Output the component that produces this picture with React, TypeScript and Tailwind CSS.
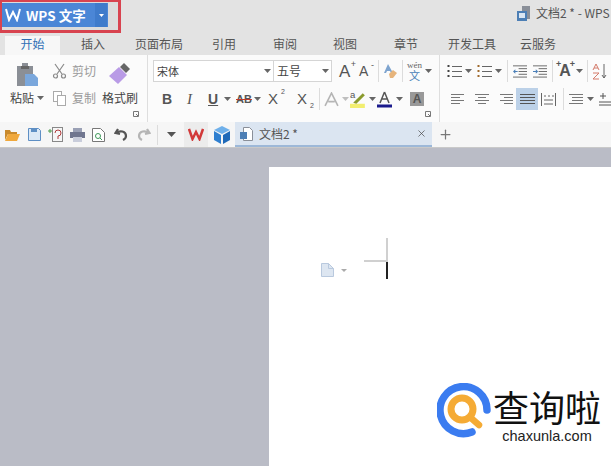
import React from 'react';
import { X, Plus } from 'lucide-react';

const cjk = "font-['Noto_Sans_CJK_SC','Liberation_Sans',sans-serif]";

const Caret = ({ className = '' }: { className?: string }) => (
  <svg width="7" height="4" viewBox="0 0 7 4" className={`shrink-0 ${className}`}>
    <path d="M0 0h7L3.5 4z" fill="#666" />
  </svg>
);

const Sep = ({ className = '' }: { className?: string }) => (
  <div className={`w-px h-[22px] bg-[#dcdcdc] shrink-0 ${className}`} />
);

const Lines = ({ rows, active }: { rows: [number, number][]; active?: boolean }) => (
  <svg width="15" height="13" viewBox="0 0 15 13">
    {rows.map(([x, w], i) => (
      <rect key={i} x={x} y={i * 3 + 1} width={w} height="1" fill={active ? '#555' : '#777'} />
    ))}
  </svg>
);

const ListIcon = ({ numbered }: { numbered?: boolean }) => (
  <svg width="15" height="15" viewBox="0 0 15 15">
    {[2, 7, 12].map(y => (
      <g key={y}>
        <rect x="0.5" y={y - 1} width="2" height="2" fill={numbered ? '#a06a2c' : '#444'} />
        <rect x="5" y={y} width="10" height="1" fill="#666" />
      </g>
    ))}
  </svg>
);

const IndentIcon = ({ right }: { right?: boolean }) => (
  <svg width="14" height="14" viewBox="0 0 15 14">
    {[1, 4, 7, 10, 13].map(y => (
      <rect key={y} x={y === 1 || y === 13 ? 0 : 6} y={y} width={y === 1 || y === 13 ? 15 : 9} height="1" fill="#666" />
    ))}
    <path d={right ? 'M0 7h3V5l2.500 2.500L3 10V8H0z' : 'M5 7H2.500V5L0 7.500 2.500 10V8H5z'} fill="#4a7fb8" />
  </svg>
);

function TitleBar() {
  return (
    <div className="h-9 bg-[#e3e3e3] flex items-start">
      <div className="w-[121px] h-[33px] border-[3px] border-t-[2px] border-l-[2px] border-[#d8434f] bg-[#dcdcdc] shrink-0 pt-px">
        <div className="w-[106px] h-[24px] bg-[#4b86d6] flex items-center text-white">
          <svg width="16" height="14" viewBox="0 0 16 14" className="ml-[3px] shrink-0">
            <path d="M1 1l3 11 4-8 4 8 3-11" fill="none" stroke="#fff" strokeWidth="2" />
          </svg>
          <span className={`ml-[5px] text-[13.5px] font-bold w-[68px] whitespace-nowrap ${cjk}`}>WPS 文字</span>
          <div className="ml-[1px] w-3 h-full bg-[#3f7bcb] flex items-center justify-center">
            <svg width="5" height="3" viewBox="0 0 5 3"><path d="M0 0h5L2.500 3z" fill="#fff" /></svg>
          </div>
        </div>
      </div>
      <svg width="15" height="16" viewBox="0 0 15 16" className="ml-[395px] mt-[6px] shrink-0">
        <rect x="6" y="0" width="8" height="13" fill="#8a8f98" />
        <rect x="1" y="5" width="10" height="10" fill="#4d7fb5" />
        <rect x="3" y="7" width="6" height="5" fill="#dbe7f3" />
      </svg>
      <span className={`ml-[5px] mt-[5px] text-[12px] leading-4 text-[#555] whitespace-nowrap ${cjk}`}>文档2 * - WPS</span>
    </div>
  );
}

const tabs: [string, string][] = [
  ['插入', 'ml-[21px] w-[24px]'],
  ['页面布局', 'ml-[30px] w-[48px]'],
  ['引用', 'ml-[29px] w-[24px]'],
  ['审阅', 'ml-[37px] w-[24px]'],
  ['视图', 'ml-[36px] w-[24px]'],
  ['章节', 'ml-[37px] w-[24px]'],
  ['开发工具', 'ml-[30px] w-[48px]'],
  ['云服务', 'ml-[24px] w-[36px]'],
];

function TabBar() {
  return (
    <div className={`h-[19px] bg-[#e3e3e3] flex items-start text-[12px] leading-[16px] text-[#555] ${cjk}`}>
      <div className="ml-[5px] w-[55px] h-full bg-[#f7f7f7] text-center text-[#2f6fb5]">开始</div>
      {tabs.map(([name, cls]) => (
        <span key={name} className={`${cls} whitespace-nowrap`}>{name}</span>
      ))}
    </div>
  );
}

// small corner button at the bottom right of a ribbon group
const Launcher = () => (
  <svg width="6" height="6" viewBox="0 0 6 6" className="absolute right-[8px] bottom-[5px]" fill="none" stroke="#777">
    <path d="M0.500 5.500v-5h5v5zM3 3l2 2" />
  </svg>
);

function ClipboardGroup() {
  return (
    <div className={`relative w-[148px] shrink-0 border-r border-[#dedede] flex text-[12px] ${cjk}`}>
      <div className="w-[47px] flex flex-col items-start pl-[10px] pt-[7px] shrink-0">
        <svg width="24" height="25" viewBox="0 0 24 25" className="ml-[5px]">
          <path d="M2 4h5V1h6v3h5v20H2z" fill="#8b8f96" />
          <rect x="6" y="4" width="8" height="3" fill="#666" />
          <path d="M10 12h9l4 4v8H10z" fill="#7aa7dc" />
        </svg>
        <div className="flex items-center gap-[3px] mt-[2px] text-[#444] whitespace-nowrap">粘贴<Caret /></div>
      </div>
      <div className="w-[55px] pl-[5px] pt-[7px] text-[#9a9a9a] shrink-0">
        <div className="flex items-center h-[18px] gap-[5px]">
          <svg width="15" height="16" viewBox="0 0 15 16" fill="none" stroke="#8a8a8a" strokeWidth="1.200" className="shrink-0">
            <path d="M3 1l7 10M12 1L5 11" />
            <circle cx="3.500" cy="13" r="2" />
            <circle cx="11.500" cy="13" r="2" />
          </svg>
          剪切
        </div>
        <div className="flex items-center h-[18px] gap-[5px] mt-[9px]">
          <svg width="15" height="16" viewBox="0 0 15 16" fill="#fff" stroke="#aaa" className="shrink-0">
            <rect x="1.500" y="1.500" width="8" height="10" />
            <rect x="5.500" y="5.500" width="8" height="10" />
          </svg>
          复制
        </div>
      </div>
      <div className="flex flex-col items-center pt-[7px] text-[#444] w-[36px] shrink-0">
        <svg width="24" height="23" viewBox="0 0 24 23">
          <path d="M1 14L11 5l8 8-9 9z" fill="#b99be6" />
          <path d="M12 5l4-4 1 1 5 5-4 4z" fill="#666" />
        </svg>
        <span className="mt-[4px] whitespace-nowrap">格式刷</span>
      </div>
      <Launcher />
    </div>
  );
}

function FontGroup() {
  return (
    <div className={`relative w-[292px] shrink-0 border-r border-[#dedede] pl-[5px] pt-[5px] ${cjk}`}>
      <div className="flex items-center h-[22px]">
        <div className="w-[121px] h-[22px] border border-[#d5d5d5] bg-white flex items-center justify-between pl-[3px] pr-[2px] text-[11px] text-[#444]">
          宋体<Caret />
        </div>
        <div className="w-[58px] h-[22px] border border-l-0 border-[#d5d5d5] bg-white flex items-center justify-between pl-[3px] pr-[2px] text-[12px] text-[#444]">
          五号<Caret />
        </div>
        <span className="ml-[7px] w-[13px] text-[17px] leading-none text-[#555] font-['Liberation_Sans',sans-serif] relative">A<span className="absolute -top-[3px] -right-[4px] text-[9px]">+</span></span>
        <span className="ml-[7px] w-[13px] text-[14px] leading-none text-[#555] font-['Liberation_Sans',sans-serif] relative">A<span className="absolute -top-[3px] -right-[2px] text-[9px]">-</span></span>
        <Sep className="ml-[6px]" />
        <svg width="14" height="16" viewBox="0 0 14 16" className="ml-[4px] shrink-0">
          <path d="M5 1L1 10h2l1-2h3l1 2h2z" fill="#7ea4cf" />
          <path d="M6 11l4-4 4 3-4 5H7z" fill="#e6b47c" />
        </svg>
        <Sep className="ml-[5px]" />
        <div className="ml-[4px] w-[15px] flex flex-col items-center text-[#666] font-['Liberation_Serif',serif]">
          <span className="text-[9px] leading-[9px]">wén</span>
          <span className={`text-[11px] leading-[11px] text-[#4a7fb8] ${cjk}`}>文</span>
        </div>
        <Caret className="ml-[3px]" />
      </div>
      <div className="flex items-center h-[22px] mt-[6px] font-['Liberation_Sans',sans-serif] text-[#555]">
        <span className="ml-[9px] w-[9px] text-[14px] font-bold">B</span>
        <span className="ml-[16px] w-[7px] text-[15px] italic font-['Liberation_Serif',serif]">I</span>
        <span className="ml-[14px] w-[11px] text-[14px] underline font-bold">U</span>
        <Caret className="ml-[5px]" />
        <span className="ml-[5px] w-[15px] text-[11px] font-bold line-through decoration-[#c0392b]">AB</span>
        <Caret className="ml-[3px]" />
        <span className="ml-[7px] w-[16px] text-[15px] text-[#555] relative">X<span className="absolute -top-[1px] -right-[1px] text-[7px]">2</span></span>
        <span className="ml-[13px] w-[16px] text-[15px] text-[#555] relative">X<span className="absolute -bottom-[1px] -right-[1px] text-[7px]">2</span></span>
        <Sep className="ml-[6px]" />
        <svg width="15" height="15" viewBox="0 0 14 14" className="ml-[4px] shrink-0" fill="none" stroke="#b5b5b5" strokeWidth="1.500">
          <path d="M1 13L7 1l6 12M4 9h6" />
        </svg>
        <Caret className="ml-[3px] opacity-40" />
        <svg width="17" height="18" viewBox="0 0 16 17" className="ml-[1px] shrink-0">
          <rect x="0" y="13" width="14" height="4" fill="#f2ee70" />
          <path d="M3 12l9-9 2 2-8 8z" fill="#8a9a2c" />
          <text x="0" y="8" fontSize="9" fill="#555">a</text>
        </svg>
        <Caret className="ml-[2px]" />
        <svg width="15" height="17" viewBox="0 0 15 17" className="ml-[1px] shrink-0">
          <path d="M7.500 1L3 12M7.500 1L12 12M5 8h5" stroke="#555" strokeWidth="1.500" fill="none" />
          <rect x="0" y="13.500" width="15" height="3" fill="#1a1a8c" />
        </svg>
        <Caret className="ml-[4px]" />
        <div className="ml-[7px] w-[14px] h-[14px] bg-[#999] text-[#555] text-[12px] leading-[14px] text-center font-bold shrink-0">A</div>
      </div>
      <Launcher />
    </div>
  );
}

function ParagraphGroup() {
  return (
    <div className="pl-[7px] pt-[5px] flex-1 overflow-hidden">
      <div className="flex items-center h-[22px]">
        <ListIcon />
        <Caret className="ml-[3px]" />
        <div className="ml-[5px]"><ListIcon numbered /></div>
        <Caret className="ml-[3px]" />
        <Sep className="ml-[5px]" />
        <div className="ml-[5px]"><IndentIcon /></div>
        <div className="ml-[6px]"><IndentIcon right /></div>
        <Sep className="ml-[5px]" />
        <span className="ml-[4px] w-[16px] text-[16px] leading-none text-[#555] font-bold text-center relative font-['Liberation_Sans',sans-serif]">
          A
          <span className="absolute -top-[3px] -left-[1px] text-[9px]">+</span>
          <span className="absolute -top-[3px] -right-[2px] text-[9px]">+</span>
        </span>
        <Caret className="ml-[3px]" />
        <Sep className="ml-[4px]" />
        <svg width="16" height="17" viewBox="0 0 16 17" className="ml-[4px] shrink-0">
          <path d="M1 7l3-6 3 6M2 5h4" fill="none" stroke="#d47a6a" />
          <path d="M1 10h6l-6 6h6" fill="none" stroke="#d47a6a" />
          <path d="M12 1v14m-2-3l2 3 2-3" fill="none" stroke="#666" />
        </svg>
      </div>
      <div className="flex items-center h-[22px] mt-[6px]">
        <div className="ml-[4px]"><Lines rows={[[0, 13], [0, 9], [0, 13], [0, 9]]} /></div>
        <div className="ml-[9px]"><Lines rows={[[0, 14], [3, 8], [0, 14], [3, 8]]} /></div>
        <div className="ml-[9px]"><Lines rows={[[1, 13], [5, 9], [1, 13], [5, 9]]} /></div>
        <div className="ml-[2px] w-[22px] h-[22px] bg-[#bcd1e8] flex items-center justify-center shrink-0">
          <Lines active rows={[[0, 15], [0, 15], [0, 15], [0, 15]]} />
        </div>
        <svg width="15" height="13" viewBox="0 0 15 13" className="ml-[3px] shrink-0" fill="none" stroke="#666">
          <path d="M0.500 0v13M14.500 0v13M3 3h2M7 3h2M11 3h2M3 7h9M3 11h9" />
        </svg>
        <Sep className="ml-[7px]" />
        <div className="ml-[5px]"><Lines rows={[[0, 14], [3, 11], [3, 11], [0, 14]]} /></div>
        <Caret className="ml-[3px]" />
        <svg width="12" height="14" viewBox="0 0 12 14" className="ml-[5px] shrink-0" fill="none" stroke="#555">
          <path d="M4 1v6M1 4h6M0 10h12M0 13h12" />
        </svg>
      </div>
    </div>
  );
}

function Ribbon() {
  return (
    <div className="h-[67px] bg-[#fbfbfb] flex">
      <ClipboardGroup />
      <FontGroup />
      <ParagraphGroup />
    </div>
  );
}

function QuickBar() {
  return (
    <div className={`h-[26px] bg-[#f6f6f6] border-b border-[#c9c9c9] flex items-center ${cjk}`}>
      <svg width="15" height="12" viewBox="0 0 15 12" className="ml-[5px] shrink-0">
        <path d="M0 1h5l1 2h6v2H3L0 11z" fill="#c98a2d" />
        <path d="M3 5h12l-3 7H0z" fill="#f0a83c" />
      </svg>
      <svg width="13" height="13" viewBox="0 0 13 13" className="ml-[8px] shrink-0">
        <path d="M0.500 0.500h10l2 2v10h-12z" fill="#dbe8f6" stroke="#5e8fc4" />
        <rect x="3" y="1" width="6" height="3" fill="#5e8fc4" />
      </svg>
      <svg width="16" height="15" viewBox="0 0 16 15" className="ml-[7px] shrink-0" fill="none">
        <rect x="4.500" y="0.500" width="10" height="14" stroke="#888" />
        <path d="M7 6a3 3 0 1 1 3 3v3" stroke="#b03a3a" />
        <path d="M0 4h4M2 2v4" stroke="#4a9a4a" />
      </svg>
      <svg width="15" height="14" viewBox="0 0 15 14" className="ml-[6px] shrink-0">
        <rect x="3" y="0" width="9" height="4" fill="#9aa0b5" />
        <rect x="0" y="4" width="15" height="6" fill="#70768f" />
        <rect x="3" y="9" width="9" height="5" fill="#c9cddb" />
      </svg>
      <svg width="13" height="14" viewBox="0 0 13 14" className="ml-[7px] shrink-0" fill="none">
        <path d="M0.500 0.500h8l4 4v9h-12z" stroke="#777" fill="#fff" />
        <circle cx="6" cy="8" r="2.500" stroke="#3e9a5a" />
        <path d="M8 10l2 2" stroke="#3e9a5a" />
      </svg>
      <svg width="14" height="13" viewBox="0 0 14 13" className="ml-[9px] shrink-0" fill="none" stroke="#555" strokeWidth="2.200">
        <path d="M4 1L1.500 5 6 6M2 5c4-3 10-2 10 3 0 2-1 3-3 4" />
      </svg>
      <svg width="14" height="13" viewBox="0 0 14 13" className="ml-[9px] shrink-0" fill="none" stroke="#b5b5b5" strokeWidth="2.200">
        <path d="M10 1l2.500 4L8 6M12 5C8 2 2 3 2 8c0 2 1 3 3 4" />
      </svg>
      <div className="ml-[6px] w-px h-[20px] bg-[#dcdcdc] shrink-0" />
      <svg width="9" height="5" viewBox="0 0 9 5" className="ml-[9px] shrink-0"><path d="M0 0h9L4.500 5z" fill="#555" /></svg>
      <div className="ml-[8px] w-[24px] h-full bg-[#ececec] flex items-center justify-center shrink-0">
        <svg width="16" height="13" viewBox="0 0 16 13" fill="none" stroke="#d23a3a" strokeWidth="2.500">
          <path d="M1 1l3.500 10L8 4l3.500 7L15 1" />
        </svg>
      </div>
      <svg width="18" height="18" viewBox="0 0 18 18" className="ml-[5px] shrink-0">
        <path d="M9 0l8 4-8 4-8-4z" fill="#6fb0ea" />
        <path d="M1 5l7 4v9l-7-4z" fill="#2f7fd0" />
        <path d="M17 5l-7 4v9l7-4z" fill="#1f69b8" />
      </svg>
      <div className="ml-[4px] w-[197px] h-full bg-[#dbe5f1] border-b-2 border-[#9db8d8] flex items-center shrink-0">
        <svg width="13" height="14" viewBox="0 0 13 14" className="ml-[5px] shrink-0">
          <path d="M3.500 0.500h6l3 3v10h-9z" fill="#fff" stroke="#8a8f98" />
          <rect x="0" y="5" width="7" height="7" fill="#4d7fb5" />
        </svg>
        <span className="ml-[6px] text-[12px] text-[#555] whitespace-nowrap">文档2 *</span>
        <X size={11} strokeWidth={1.5} color="#444" className="ml-auto mr-[5px]" />
      </div>
      <Plus size={15} strokeWidth={2} color="#777" className="ml-[6px] shrink-0" />
    </div>
  );
}

function Page() {
  return (
    <div className="h-[318px] bg-[#babcc6] pt-[19px] pl-[269px] overflow-hidden">
      <div className="h-full bg-white pl-[52px] pt-[71px] flex items-start">
        <svg width="13" height="14" viewBox="0 0 13 14" className="mt-[25px] shrink-0">
          <path d="M0.500 0.500h7l5 5v8h-12z" fill="#dde6f1" stroke="#b9c9de" />
          <path d="M7.500 0.500v5h5" fill="none" stroke="#b9c9de" />
        </svg>
        <svg width="6" height="3" viewBox="0 0 6 3" className="ml-[7px] mt-[31px] shrink-0"><path d="M0 0h6L3 3z" fill="#aaa" /></svg>
        <div className="ml-[17px] flex flex-col items-end w-[24px] shrink-0">
          <div className="flex items-end h-[24px]">
            <div className="w-[22px] h-[2px] bg-[#d0d0d0]" />
            <div className="w-[2px] h-[24px] bg-[#d0d0d0]" />
          </div>
          <div className="w-[2px] h-[17px] bg-[#222]" />
        </div>
      </div>
    </div>
  );
}

// watermark in the lower right corner, sits over the page
function Watermark() {
  return (
    <div className="absolute left-[437px] top-[383px] flex items-start">
      <svg width="56" height="56" viewBox="0 0 56 56" className="shrink-0">
        <path d="M50 27A23.500 23.500 0 1 0 35 49" fill="none" stroke="#3b7cf0" strokeWidth="7.500" strokeLinecap="round" />
        <circle cx="25" cy="26" r="11" fill="none" stroke="#f5ab35" strokeWidth="7" />
        <path d="M34 35l8 7" stroke="#f5ab35" strokeWidth="6.500" strokeLinecap="round" />
      </svg>
      <div className="flex flex-col items-center w-[108px] pt-[3px]">
        <span className={`text-[36px] leading-[40px] text-[#111] whitespace-nowrap ${cjk}`}>查询啦</span>
        <span className="mt-[3px] text-[14.5px] leading-[14px] text-[#222] font-['Liberation_Sans',sans-serif]">chaxunla.com</span>
      </div>
    </div>
  );
}

export default function App() {
  return (
    <div className="relative w-[611px] h-[466px] overflow-hidden bg-white">
      <TitleBar />
      <TabBar />
      <Ribbon />
      <QuickBar />
      <Page />
      <Watermark />
    </div>
  );
}
